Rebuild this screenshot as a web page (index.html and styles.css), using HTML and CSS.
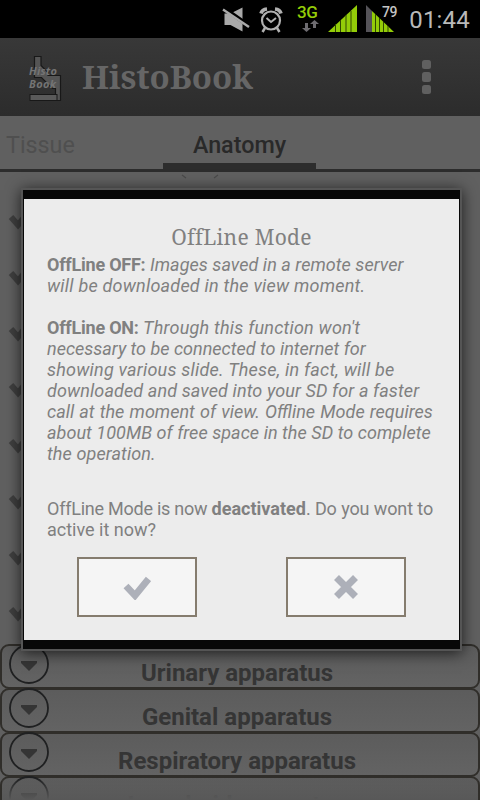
FILE: index.html
```html
<!DOCTYPE html>
<html lang="en">
<head>
    <meta charset="UTF-8">
    <meta name="viewport" content="width=device-width, initial-scale=1.0">
    <title>HistoBook</title>
    <link rel="stylesheet" href="styles.css">
</head>
<body>
    <div class="statusbar">
        <svg class="status-icons" width="182" height="38" viewBox="0 0 182 38">
            <!-- muted speaker -->
            <path d="M4.500 13.500h6l12-6v24l-12-6.500h-6z" fill="#a9a9a9"/>
            <path d="M3 7.500l27 19" stroke="#000" stroke-width="4"/>
            <path d="M3 9.500l26 17.500" stroke="#a9a9a9" stroke-width="2.400"/>
            <!-- alarm clock -->
            <g fill="none" stroke="#b0b0b0">
                <circle cx="51" cy="20.500" r="9" stroke-width="2.200"/>
                <path d="M46.500 18l4.500 4 5-4" stroke-width="2"/>
                <path d="M41 13.500q1-4 6-4.500M61 13.500q-1-4-6-4.500" stroke-width="3.600"/>
                <path d="M45 28l-2.500 4M57 28l2.500 4" stroke-width="2.500"/>
            </g>
            <!-- data arrows -->
            <path d="M85 23h3v5h3l-4.500 4-4.500-4h3zM93 28h3v-4h3l-4.500-4-4.500 4h3z" fill="#6d6b70"/>
            <!-- signal -->
            <path d="M108 32L137 5v27z" fill="#93cc08"/>
            <path d="M115.500 24v8M120.500 20v12M126 15v17M131 11v21" stroke="#304600" stroke-width="1"/>
            <!-- battery -->
            <path d="M146 5l6 6v21h-6z" fill="#555358"/>
            <path d="M152 11l22 21h-22z" fill="#93cc08"/>
            <path d="M155.500 14v18M159.500 18v14M163.500 22v10M168 26v6" stroke="#304600" stroke-width="1"/>
        </svg>
        <span class="network">3G</span>
        <span class="battery">79</span>
        <span class="clock">01:44</span>
    </div>

    <header class="header">
        <svg class="logo" width="36" height="52" viewBox="0 0 36 52">
            <!-- microscope -->
            <path d="M7.500 5.500h6.500v9l7 7v3h12.500v25h-5v-12h-3l-11-11h-7z" fill="#555" stroke="#181818" stroke-width="1.200"/>
            <rect x="3" y="43.500" width="27" height="6" fill="#5a5a5a" stroke="#181818"/>
            <text x="2" y="23.500" textLength="28">Histo</text>
            <text x="2" y="36.500" textLength="27">Book</text>
        </svg>
        <h1>HistoBook</h1>
        <div class="menu">
            <i></i>
            <i></i>
            <i></i>
        </div>
    </header>

    <nav class="tabs">
        <span class="tab">Tissue</span>
        <span class="tab active">Anatomy</span>
    </nav>

    <main class="list">
        <svg class="cut-title" width="480" height="21" viewBox="0 0 480 21">
            <path d="M182 3l4 3M218 3l-4 3" stroke="#4a4a4a" stroke-width="1.200"/>
        </svg>
        <div class="item"><svg viewBox="0 0 28 25"><path d="M4 8l7 8 10-12" /></svg></div>
        <div class="item"><svg viewBox="0 0 28 25"><path d="M4 8l7 8 10-12" /></svg></div>
        <div class="item"><svg viewBox="0 0 28 25"><path d="M4 8l7 8 10-12" /></svg></div>
        <div class="item"><svg viewBox="0 0 28 25"><path d="M4 8l7 8 10-12" /></svg></div>
        <div class="item"><svg viewBox="0 0 28 25"><path d="M4 8l7 8 10-12" /></svg></div>
        <div class="item"><svg viewBox="0 0 28 25"><path d="M4 8l7 8 10-12" /></svg></div>
        <div class="item"><svg viewBox="0 0 28 25"><path d="M4 8l7 8 10-12" /></svg></div>
        <div class="item"><svg viewBox="0 0 28 25"><path d="M4 8l7 8 10-12" /></svg></div>
        <div class="groups">
            <div class="group">
                <svg class="arrow" viewBox="0 0 40 40"><circle cx="20" cy="20" r="19"/><path d="M12 17h16v2l-8 8-8-8z"/></svg>
                <span>Urinary apparatus</span>
            </div>
            <div class="group">
                <svg class="arrow" viewBox="0 0 40 40"><circle cx="20" cy="20" r="19"/><path d="M12 17h16v2l-8 8-8-8z"/></svg>
                <span>Genital apparatus</span>
            </div>
            <div class="group">
                <svg class="arrow" viewBox="0 0 40 40"><circle cx="20" cy="20" r="19"/><path d="M12 17h16v2l-8 8-8-8z"/></svg>
                <span>Respiratory apparatus</span>
            </div>
            <div class="group last">
                <svg class="arrow" viewBox="0 0 40 40"><circle cx="20" cy="20" r="19"/><path d="M12 17h16v2l-8 8-8-8z"/></svg>
                <span>Lymphoid apparatus</span>
            </div>
        </div>
    </main>

    <div class="dialog">
        <div class="dialog-body">
            <h2>OffLine Mode</h2>
            <p>
                <b class="tight">OffLine OFF:</b> <em class="snug">Images saved in a remote server</em><br>
                <em class="wide">will be downloaded in the view moment.</em>
            </p>
            <p>
                <b class="tight">OffLine ON:</b> <em class="wide">Through this function won't</em><br>
                <em>necessary to be connected to internet for</em><br>
                <em class="wide">showing various slide. These, in fact, will be</em><br>
                <em class="mid">downloaded and saved into your SD for a faster</em><br>
                <em class="spaced">call at the moment of view. Offline Mode requires</em><br>
                <em class="snug">about 100MB of free space in the SD to complete</em><br>
                <em class="mid">the operation.</em>
            </p>
            <p class="question"><span class="tight">OffLine Mode is now </span><b>deactivated</b><span class="less">. Do you wont to</span><br>active it now?</p>
            <div class="buttons">
                <button class="btn" aria-label="Yes">
                    <svg width="28" height="26" viewBox="0 0 28 26"><path d="M3 12l9 9.500L25.500 5" stroke-width="6.800"/></svg>
                </button>
                <button class="btn" aria-label="No">
                    <svg width="28" height="26" viewBox="0 0 28 26"><path d="M4.500 3.500l19 19M23.500 3.500l-19 19" stroke-width="7"/></svg>
                </button>
            </div>
        </div>
    </div>
</body>
</html>
```
FILE: styles.css
```css
* {
    box-sizing: border-box;
}
body {
    margin: 0;
    width: 480px;
    height: 800px;
    overflow: hidden;
    position: relative;
    display: flex;
    flex-direction: column;
    background: #606060;
    font-family: Roboto, sans-serif;
}
.statusbar {
    position: relative;
    height: 38px;
    flex: none;
    background: #000;
    display: flex;
    justify-content: flex-end;
    align-items: center;
    padding-right: 10px;
}
.status-icons {
    margin-right: 7px;
}
.network {
    position: absolute;
    left: 297px;
    top: 2px;
    font-size: 17px;
    line-height: 20px;
    font-weight: 500;
    letter-spacing: -0.5px;
    color: #93cc08;
}
.battery {
    position: absolute;
    left: 382px;
    top: 3px;
    font-size: 14px;
    line-height: 18px;
    font-weight: 500;
    letter-spacing: -0.5px;
    color: #c4c4c4;
}
.clock {
    font-size: 24px;
    color: #b9b9b9;
    letter-spacing: 0.2px;
    padding-top: 2px;
}
.header {
    height: 78px;
    flex: none;
    display: flex;
    align-items: center;
    padding: 0 49px 0 27px;
    background: linear-gradient(#383838, #2c2c2c);
}
.logo text {
    font: italic bold 11px "Open Sans", sans-serif;
    fill: #747474;
}
.header h1 {
    margin: -2px 0 0 19px;
    font: bold 33px "Noto Serif", "DejaVu Serif Condensed", "DejaVu Serif", serif;
    letter-spacing: -0.1px;
    color: #666;
}
.menu {
    margin-left: auto;
    display: flex;
    flex-direction: column;
    gap: 3px;
}
.menu i {
    width: 9px;
    height: 9.500px;
    border-radius: 2.500px;
    background: #606060;
}
.tabs {
    height: 56px;
    flex: none;
    display: flex;
    border-bottom: 3px solid #2d2d2d;
    font-size: 23.300px;
    line-height: 58px;
}
.tab {
    width: 163px;
    padding-left: 6px;
    color: #4f4f4f;
}
.tab.active {
    width: 153px;
    height: 56px;
    padding: 0;
    text-align: center;
    font-weight: 500;
    color: #292929;
    border-bottom: 9px solid #2d2d2d;
}
.list {
    flex: 1;
    overflow: hidden;
}
.cut-title {
    display: block;
}
.item {
    height: 56px;
    display: flex;
    align-items: center;
    padding-left: 7px;
}
.item svg {
    width: 28px;
}
.item path {
    fill: none;
    stroke: #404040;
    stroke-width: 6;
}
.groups {
    padding-top: 3px;
}
.group {
    position: relative;
    height: 45px;
    margin-bottom: -1px;
    border: 2px solid #302e2a;
    border-radius: 9px;
    background: linear-gradient(#5c5c5c, #636363);
    text-align: center;
}
.group span {
    display: block;
    height: 39px;
    overflow: hidden;
    padding: 13px 6px 0 0;
    font-size: 24px;
    line-height: 28px;
    font-weight: bold;
    color: #353535;
}
.arrow {
    position: absolute;
    left: 7px;
    top: -2px;
    width: 40px;
}
.arrow circle {
    fill: none;
    stroke: #1f2021;
    stroke-width: 1.800;
}
.arrow path {
    fill: #353535;
}
/* bottom row fades out where the list scrolls on */
.group.last::after {
    content: "";
    position: absolute;
    left: 0;
    right: 0;
    top: 0;
    height: 22px;
    background: linear-gradient(rgba(88, 88, 88, 0), #585858);
}
.group.last span {
    opacity: 0.6;
}
.dialog {
    position: absolute;
    left: 21px;
    top: 188px;
    width: 441px;
    height: 463px;
    padding: 9px 1px;
    border: 2px solid #555;
    background: #080808;
    box-shadow: 0 2px 14px rgba(0, 0, 0, 0.7);
}
.dialog-body {
    height: 441px;
    padding: 26px 23px 0;
    background: #ececec;
    color: #808080;
    font-size: 18px;
    line-height: 21px;
}
.dialog h2 {
    margin: 0 0 4px;
    text-align: center;
    font: 21px/25px "Noto Serif", "DejaVu Serif Condensed", "DejaVu Serif", serif;
    letter-spacing: 0.3px;
}
.dialog p {
    margin: 0 0 21px;
    white-space: nowrap;
}
.dialog .question {
    margin: 34px 0 17px;
}
.tight {
    letter-spacing: -0.24px;
}
.less {
    letter-spacing: -0.1px;
}
.snug {
    letter-spacing: 0.05px;
}
.mid {
    letter-spacing: 0.11px;
}
.wide {
    letter-spacing: 0.22px;
}
.spaced {
    word-spacing: 0.8px;
}
.buttons {
    display: flex;
    justify-content: space-between;
    padding: 0 30px;
}
.btn {
    width: 120px;
    height: 60px;
    padding: 0;
    display: flex;
    align-items: center;
    justify-content: center;
    border: 2px solid #857c6e;
    background: #f5f5f5;
}
.btn path {
    fill: none;
    stroke: #adb0b9;
}
```
